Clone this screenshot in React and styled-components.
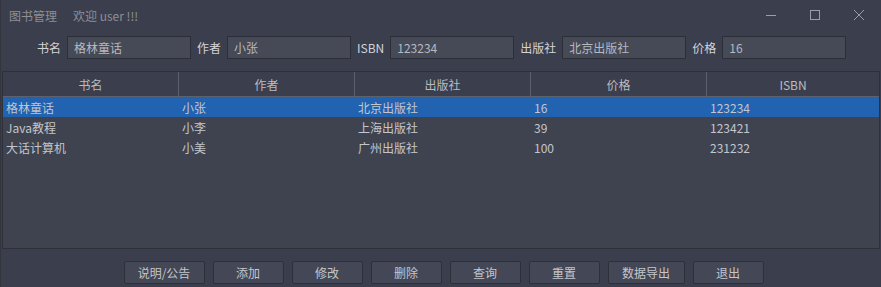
import { createGlobalStyle, styled } from "styled-components";

const books = [
  { name: "格林童话", author: "小张", press: "北京出版社", price: "16", isbn: "123234" },
  { name: "Java教程", author: "小李", press: "上海出版社", price: "39", isbn: "123421" },
  { name: "大话计算机", author: "小美", press: "广州出版社", price: "100", isbn: "231232" },
];

const fields = [
  { label: "书名", value: "格林童话" },
  { label: "作者", value: "小张" },
  { label: "ISBN", value: "123234" },
  { label: "出版社", value: "北京出版社" },
  { label: "价格", value: "16" },
];

const columns = ["书名", "作者", "出版社", "价格", "ISBN"];

const buttons = [
  { text: "说明/公告", width: 81 },
  { text: "添加", width: 71 },
  { text: "修改", width: 71 },
  { text: "删除", width: 71 },
  { text: "查询", width: 71 },
  { text: "重置", width: 71 },
  { text: "数据导出", width: 77 },
  { text: "退出", width: 71 },
];

const App = () => {
  return (
    <>
      <GlobalStyle />
      <Frame>
        <TitleBar>
          <Title>图书管理</Title>
          <Welcome>欢迎 user !!!</Welcome>
          <Controls>
            <Control>
              <svg width="12" height="12" viewBox="0 0 12 12">
                <path d="M1 6.5h10" stroke="#9a9da6" strokeWidth="1" />
              </svg>
            </Control>
            <Control>
              <svg width="12" height="12" viewBox="0 0 12 12">
                <rect x="1.5" y="1.5" width="9" height="9" fill="none" stroke="#9a9da6" strokeWidth="1" />
              </svg>
            </Control>
            <Control>
              <svg width="12" height="12" viewBox="0 0 12 12">
                <path d="M1 1l10 10M11 1L1 11" stroke="#9a9da6" strokeWidth="1" />
              </svg>
            </Control>
          </Controls>
        </TitleBar>

        <FormRow>
          {fields.map(({ label, value }) => (
            <Field key={label}>
              <Label>{label}</Label>
              <Input defaultValue={value} />
            </Field>
          ))}
        </FormRow>

        <TableBox>
          <HeaderRow>
            {columns.map((c) => (
              <Th key={c}>{c}</Th>
            ))}
          </HeaderRow>
          {books.map((b, i) => (
            <Row key={b.isbn} $selected={i === 0}>
              <Td>{b.name}</Td>
              <Td>{b.author}</Td>
              <Td>{b.press}</Td>
              <Td>{b.price}</Td>
              <Td>{b.isbn}</Td>
            </Row>
          ))}
        </TableBox>

        <ButtonBar>
          {buttons.map(({ text, width }) => (
            <Button key={text} $width={width}>
              {text}
            </Button>
          ))}
        </ButtonBar>
      </Frame>
    </>
  );
};

export default App;

const GlobalStyle = createGlobalStyle`
  body {
    margin: 0;
    background: #3b3e4c;
    font-family: "Noto Sans CJK SC", "Noto Sans", sans-serif;
    font-size: 12px;
  }
`;

const Frame = styled.div`
  width: 881px;
  height: 287px;
  display: flex;
  flex-direction: column;
  background: #3b3e4c;
  box-sizing: border-box;
  border-left: 1px solid #33363f;
  overflow: hidden;
`;

const TitleBar = styled.div`
  height: 30px;
  display: flex;
  align-items: center;
  padding-left: 8px;
  color: #8c8f98;
  font-size: 12px;
`;

const Title = styled.span`
  margin-right: 16px;
`;

const Welcome = styled.span``;

const Controls = styled.div`
  margin-left: auto;
  display: flex;
  height: 100%;
`;

const Control = styled.div`
  width: 44px;
  height: 30px;
  display: flex;
  align-items: center;
  justify-content: center;
`;

const FormRow = styled.div`
  display: flex;
  align-items: center;
  gap: 6px;
  padding: 6px 0 12px 36px;
`;

const Field = styled.div`
  display: flex;
  align-items: center;
  gap: 6px;
`;

const Label = styled.span`
  color: #d2d4d9;
  font-size: 12px;
  font-weight: 400;
`;

const Input = styled.input`
  width: 124px;
  height: 23px;
  box-sizing: border-box;
  background: #464a57;
  border: 1px solid #2c2f38;
  color: #b6b9c0;
  font-family: inherit;
  font-size: 12px;
  padding: 0 6px;
  outline: none;
`;

const TableBox = styled.div`
  height: 178px;
  margin: 0 1px 0 1px;
  box-sizing: border-box;
  background: #3f4350;
  border: 1px solid #2e313a;
`;

const HeaderRow = styled.div`
  display: grid;
  grid-template-columns: repeat(4, 176px) 1fr;
  height: 24px;
  background: #3b3e4c;
  border-bottom: 1px solid #5d616b;
`;

const Th = styled.div`
  display: flex;
  align-items: center;
  justify-content: center;
  color: #b9bcc3;
  border-right: 1px solid #5d616b;

  &:last-child {
    border-right: none;
  }
`;

const Row = styled.div`
  display: grid;
  grid-template-columns: repeat(4, 176px) 1fr;
  height: 20px;
  background: ${({ $selected }) => ($selected ? "#2162b1" : "transparent")};
`;

const Td = styled.div`
  display: flex;
  align-items: center;
  padding-left: 3px;
  color: #c3c6cc;
`;

const ButtonBar = styled.div`
  display: flex;
  justify-content: center;
  gap: 8px;
  padding: 12px 0 0 5px;
`;

const Button = styled.button`
  width: ${({ $width }) => $width}px;
  height: 23px;
  box-sizing: border-box;
  background: #434756;
  border: 1px solid #2d3039;
  border-radius: 2px;
  color: #c3c6cc;
  font-family: inherit;
  font-size: 12px;
  padding: 0;
`;
